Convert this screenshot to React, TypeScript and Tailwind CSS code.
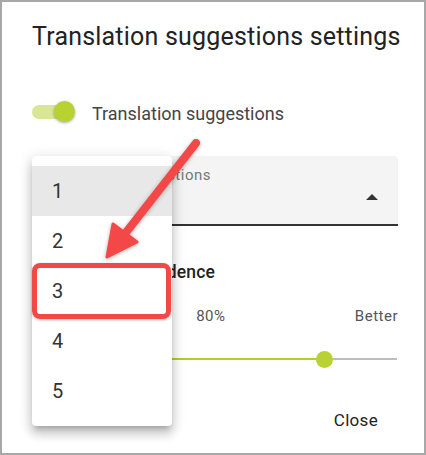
import React from "react";

export default function App() {
  const font = { fontFamily: "Roboto, 'Noto Sans', sans-serif" };
  return (
    <div
      style={font}
      className="relative w-[426px] h-[455px] overflow-hidden border-2 border-[#a8a8a8] bg-white text-[#212121]"
    >
      <div className="flex flex-col pl-[30px] pr-[26px] pt-[20px]">
        {/* Title */}
        <div className="h-[30px] leading-[30px] text-[25px] tracking-[0.2px] text-[#222] whitespace-nowrap">
          Translation suggestions settings
        </div>

        {/* Toggle row */}
        <div className="mt-[48px] flex h-[24px] items-center">
          <div className="relative h-[24px] w-[44px]">
            <div className="absolute left-0 top-[5px] h-[14px] w-[34px] rounded-full bg-[#d8e695]" />
            <div className="absolute left-[22px] top-[1px] h-[21px] w-[21px] rounded-full bg-[#b9d232] shadow-[0_1px_3px_rgba(0,0,0,0.35)]" />
          </div>
          <div className="ml-[16px] mt-[2px] text-[18px] text-[#444]">
            Translation suggestions
          </div>
        </div>

        {/* Select field */}
        <div className="mt-[32px] relative h-[70px] rounded-t-[4px] bg-[#f4f4f4] border-b-2 border-[#333]">
          <div className="absolute left-[12px] top-[8px] text-[15px] tracking-[0.5px] text-[#777]">
            Number of suggestions
          </div>
          <div className="absolute right-[20px] top-[38px] h-0 w-0 border-x-[6px] border-b-[6px] border-x-transparent border-b-[#333]" />
        </div>

        {/* Confidence heading */}
        <div className="mt-[34px] h-[24px] leading-[24px] text-[17.5px] tracking-[0.15px] font-medium text-[#222]">
          Suggestion confidence
        </div>

        {/* Labels row */}
        <div className="mt-[22px] flex h-[20px] items-center justify-between text-[15px] tracking-[0.5px] text-[#555]">
          <span>Faster</span>
          <span className="mr-[10px]">80%</span>
          <span>Better</span>
        </div>

        {/* Slider */}
        <div className="mt-[23px] relative h-[20px] mr-[1px]">
          <div className="absolute left-0 right-0 top-[9px] h-[2px] bg-[#bdbdbd]" />
          <div className="absolute left-0 top-[9px] h-[2px] w-[80%] bg-[#b5cc2a]" />
          <div className="absolute left-[calc(80%-8px)] top-[2px] h-[17px] w-[17px] rounded-full bg-[#b9d232]" />
        </div>

        {/* Close */}
        <div className="mt-[34px] flex justify-end pr-[20px]">
          <div className="flex h-[36px] items-center text-[17px] tracking-[0.3px] text-[#222]">
            Close
          </div>
        </div>
      </div>

      {/* Dropdown menu */}
      <div className="absolute left-[30px] top-[154px] w-[140px] rounded-[4px] bg-white py-[10px] shadow-[0_5px_5px_-3px_rgba(0,0,0,0.2),0_8px_10px_1px_rgba(0,0,0,0.14),0_3px_14px_2px_rgba(0,0,0,0.12)]">
        {["1", "2", "3", "4", "5"].map((n, i) => (
          <div
            key={n}
            className={
              i === 0
                ? "flex h-[50px] items-center bg-[#e8e8e8] pl-[20px] text-[20px] text-[#333]"
                : "flex h-[50px] items-center pl-[20px] text-[20px] text-[#333]"
            }
          >
            {n}
          </div>
        ))}
      </div>

      {/* Red highlight box */}
      <div className="absolute left-[30px] top-[261px] h-[56px] w-[139px] rounded-[8px] border-[5px] border-[#f44848] shadow-[0_1px_3px_rgba(0,0,0,0.25)]" />

      {/* Red arrow */}
      <svg
        className="absolute left-[-2px] top-[-2px] drop-shadow-[0_1px_2px_rgba(0,0,0,0.3)]"
        width="426"
        height="455"
        viewBox="0 0 426 455"
      >
        <line x1="196" y1="143" x2="124" y2="235" stroke="#f44848" strokeWidth="8" strokeLinecap="round" />
        <polygon
          points="107,257 113,224 137,242"
          fill="#f44848"
          stroke="#f44848"
          strokeWidth="3"
          strokeLinejoin="round"
        />
      </svg>
    </div>
  );
}
